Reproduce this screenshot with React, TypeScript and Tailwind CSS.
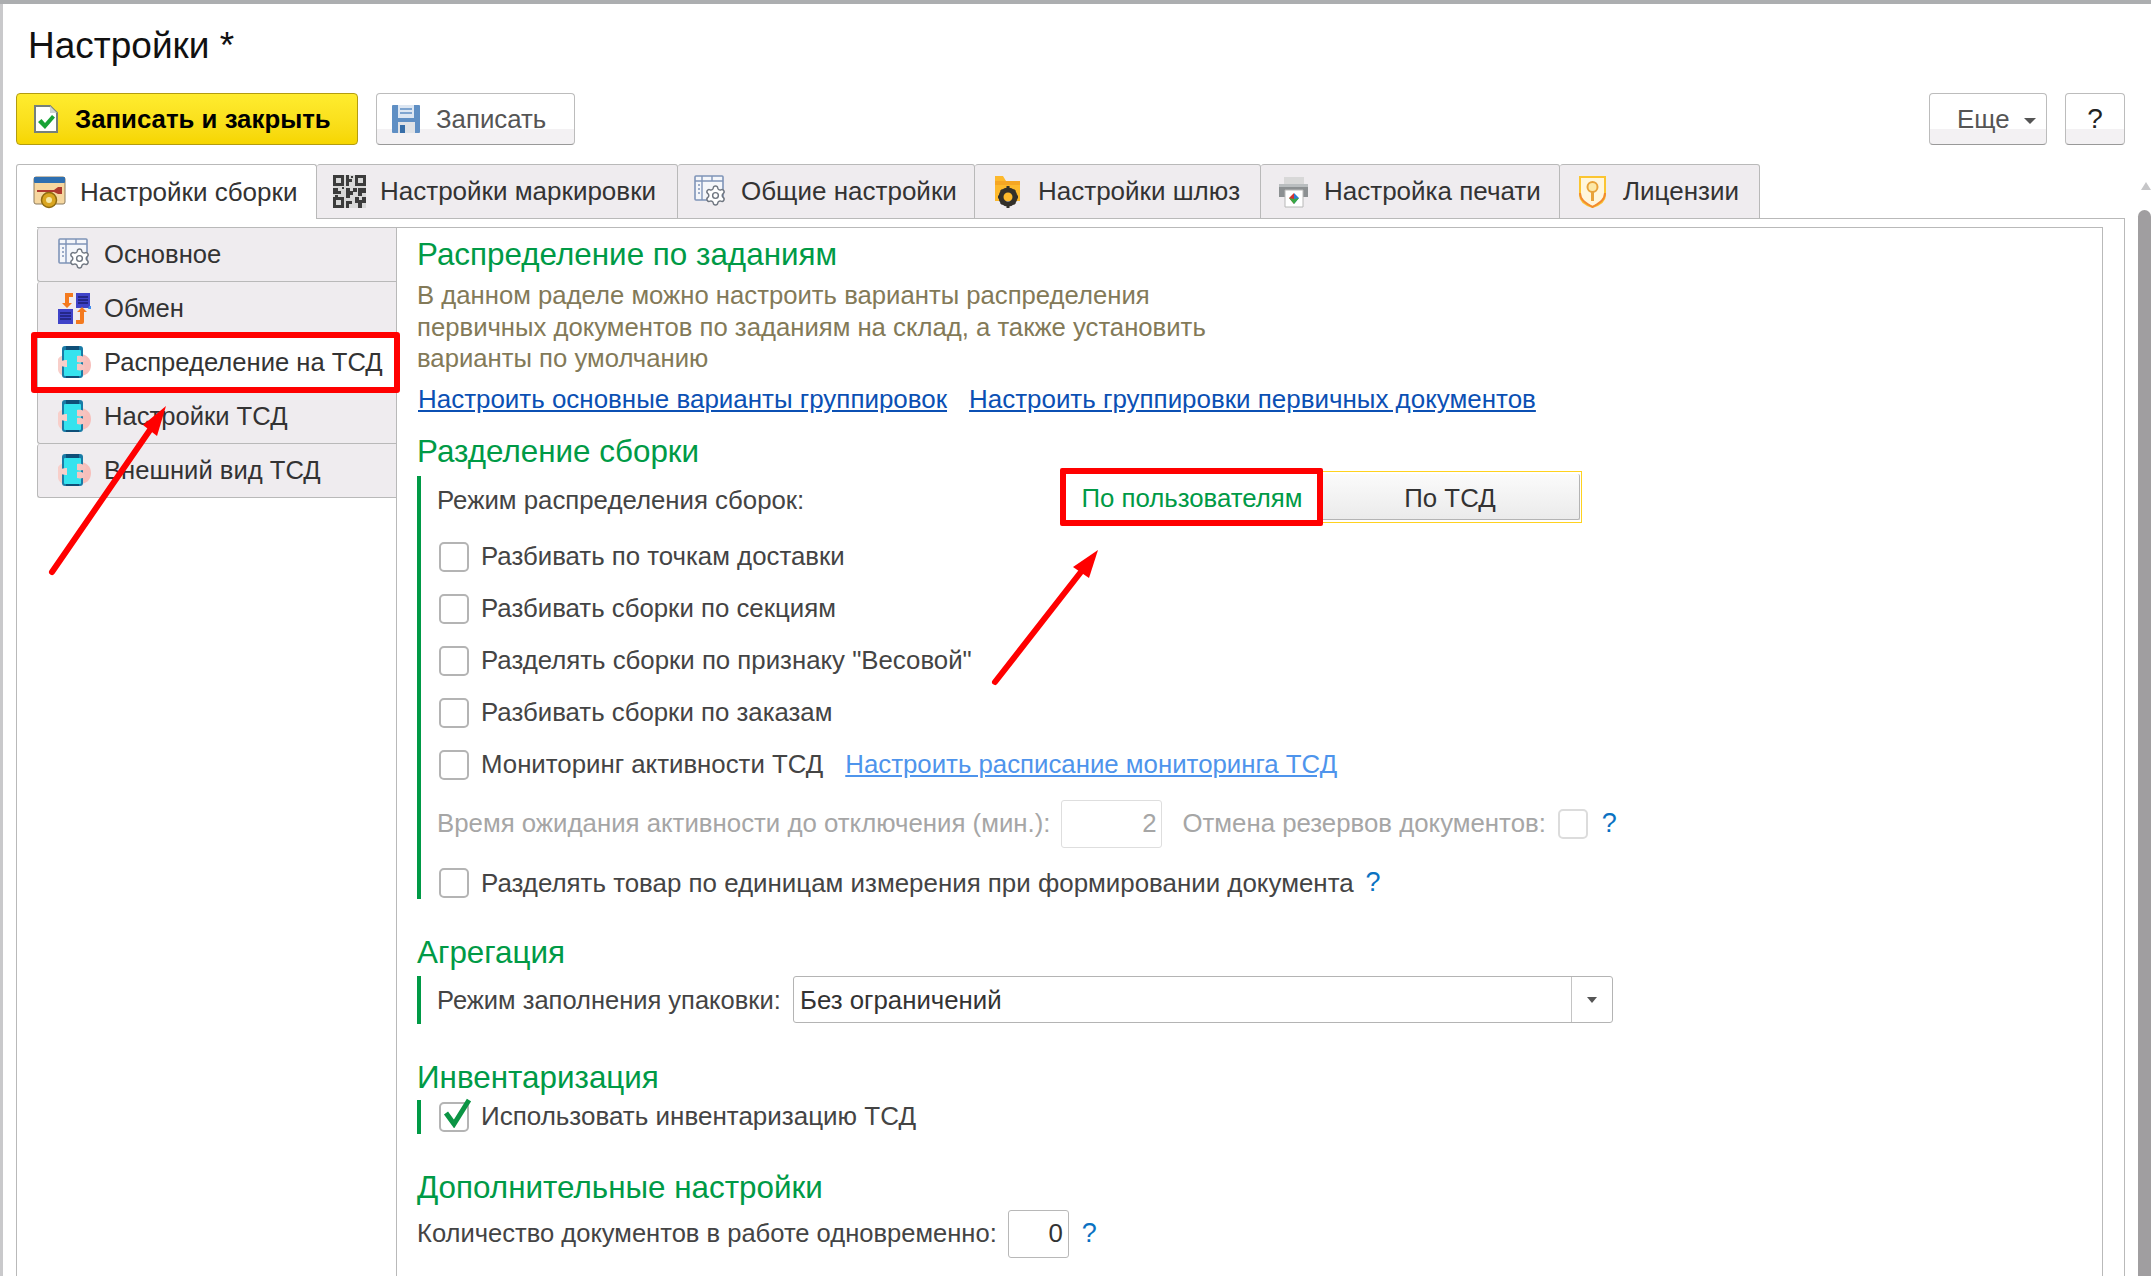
import React from 'react';
import { Settings } from 'lucide-react';

const GREEN = 'text-[#009a46]';

const GearTableIcon = () => (
  <svg width="33" height="33" viewBox="0 0 33 33" fill="none">
    <rect x="1" y="1" width="28" height="24" rx="1" fill="#f4f6fa" stroke="#7f94b8" strokeWidth="1.6" />
    <path d="M1 6h28M8 1v24M18 1v5" stroke="#7f94b8" strokeWidth="1.4" />
    <path d="M4 10h2M4 14h2M4 18h2" stroke="#7f94b8" strokeWidth="1.4" />
    <Settings x={10} y={9} width={23} height={23} color="#6f7680" fill="#ffffff" strokeWidth={1.5} />
  </svg>
);

const BuildIcon = () => (
  <svg width="33" height="33" viewBox="0 0 33 33" fill="none">
    <rect x="1" y="1" width="31" height="27" rx="2" fill="#f6d7a0" stroke="#8b7a5c" />
    <rect x="1" y="1" width="31" height="6" rx="1" fill="#2e6fb0" />
    <path d="M4 14h17l4-3h4v7h-4l-4-2H4z" fill="#b03a2e" />
    <circle cx="16" cy="24" r="7.5" fill="#d9a520" stroke="#8f6b10" strokeWidth="1.5" />
    <circle cx="16" cy="24" r="3" fill="#f6e8a6" />
  </svg>
);

const QrIcon = () => (
  <svg width="33" height="33" viewBox="0 0 33 33">
    <rect width="33" height="33" fill="#d8d8d8" />
    <path
      fill="#3c3c3c"
      d="M0 0h11v11H0zM3 3v5h5V3zM22 0h11v11H22zM25 3v5h5V3zM0 22h11v11H0zM3 25v5h5v-5zM13 0h3v4h3v3h-3v4h-3zM18 1h2v2h-2zM13 13h4v3h3v-3h4v4h-4v3h-3v3h-4zM0 13h5v3h3v3H0zM2 20h3v2H2zM25 13h8v5h-4v3h-4zM22 22h4v3h3v-3h4v6h-4v5h-4v-5h-3zM13 26h6v3h-3v4h-3zM9 12h2v2H9z"
    />
  </svg>
);

const FolderGearIcon = () => (
  <svg width="33" height="33" viewBox="0 0 33 33">
    <path d="M4 1h8l3 5h14v20H4z" fill="#fdb92c" />
    <path d="M4 6h25v4H4z" fill="#f5a623" />
    <circle cx="17" cy="22" r="7" fill="none" stroke="#33302a" strokeWidth="5" />
    <path d="M17 11v4M17 29v4M7 22h3M24 22h3M10 15l2 2M22 27l2 2M24 15l-2 2M12 27l-2 2" stroke="#33302a" strokeWidth="3" />
  </svg>
);

const PrinterIcon = () => (
  <svg width="33" height="33" viewBox="0 0 33 33">
    <rect x="7" y="2" width="20" height="8" fill="#d8d8d8" />
    <path d="M2 9h29v13H2z" fill="#8c9092" />
    <path d="M2 9h29v3H2z" fill="#b9bdbf" />
    <path d="M8 15h18v17H8z" fill="#fff" stroke="#b8b8b8" />
    <path d="M17 18l-5 5 5 6z" fill="#d62f2f" />
    <path d="M17 18l5 5-5 6z" fill="#2f7fd6" />
    <path d="M12 23l5 6 5-6-5 1z" fill="#39a845" />
  </svg>
);

const LicenseIcon = () => (
  <svg width="33" height="33" viewBox="0 0 33 33" fill="none">
    <path d="M4 2h25v18c0 6-6 10-12.500 12C10 30 4 26 4 20z" fill="#fff6dc" stroke="#fbc531" strokeWidth="2" />
    <path d="M4 18c0 7 6 10 12.500 14C23 28 29 25 29 18" stroke="#f28a30" strokeWidth="2" />
    <circle cx="16.500" cy="12" r="5" stroke="#e8a33a" strokeWidth="2" fill="#fde9a8" />
    <path d="M16.500 17v9" stroke="#e8a33a" strokeWidth="3" />
  </svg>
);

const ExchangeIcon = () => (
  <svg width="33" height="33" viewBox="0 0 33 33">
    <rect x="18" y="1" width="14" height="15" fill="#3f43c9" />
    <path d="M20 5h10M20 8h10M20 11h10" stroke="#1c1f73" strokeWidth="1.5" />
    <path d="M31 14h2v3h-3z" fill="#3f8cf0" />
    <rect x="0" y="17" width="15" height="15" fill="#3f43c9" />
    <path d="M2 21h11M2 24h11M2 27h11" stroke="#1c1f73" strokeWidth="1.5" />
    <path d="M7 1h8v4h-4v6h3l-5 5-5-5h3V3z" fill="#f47a1f" />
    <path d="M18 32v-4h4v-8h-3l5-5 5 5h-3v10a2 2 0 0 1-2 2z" fill="#f47a1f" />
  </svg>
);

const PhoneIcon = () => (
  <svg width="33" height="33" viewBox="0 0 33 33">
    <path d="M0 13c2-3 5-4 7-4v21c-3 0-6-2-7-6z" fill="#f8cfca" />
    <path d="M22 8c6 0 11 4 11 11s-5 11-11 11z" fill="#f7bfbb" />
    <rect x="4" y="0" width="21" height="32" rx="3" fill="#1a7ba6" />
    <rect x="6" y="4" width="17" height="26" rx="1" fill="#35e3ee" />
    <path d="M8 0h13v4H8zM8 30h13v2H8z" fill="#0e4f78" />
    <path d="M19 10c4-1 9 1 9 3.500S23 17 19 16zM19 18c4-1 8 1 8 3.500S23 25 19 24z" fill="#f7c4c0" />
    <path d="M9 21c-4 0-7-1-7-3.500S5 14 9 14z" fill="#f8cfca" />
  </svg>
);

const SaveCloseIcon = () => (
  <svg width="24" height="28" viewBox="0 0 24 28">
    <path d="M1 1h15l7 7v19H1z" fill="#fff" stroke="#75807c" strokeWidth="2" />
    <path d="M16 1v7h7z" fill="#cfd4d2" />
    <path d="M4 17l3.500-3 3.500 4 7-8 3 2.500L11 24z" fill="#17a335" />
  </svg>
);

const SaveIcon = () => (
  <svg width="28" height="28" viewBox="0 0 28 28">
    <rect width="28" height="28" rx="1" fill="#5f8fc4" />
    <rect x="6" y="0" width="16" height="13" fill="#dce6f2" />
    <path d="M8 4h12M8 8h12" stroke="#5f8fc4" strokeWidth="1.5" />
    <rect x="6" y="17" width="17" height="11" fill="#dfe2e6" />
    <rect x="8" y="20" width="5" height="8" fill="#376ea8" />
  </svg>
);

const tabs = [
  { label: 'Настройки сборки', width: 'w-[301px]', icon: <BuildIcon />, active: true },
  { label: 'Настройки маркировки', width: 'w-[361px]', icon: <QrIcon /> },
  { label: 'Общие настройки', width: 'w-[297px]', icon: <GearTableIcon /> },
  { label: 'Настройки шлюз', width: 'w-[286px]', icon: <FolderGearIcon /> },
  { label: 'Настройка печати', width: 'w-[299px]', icon: <PrinterIcon /> },
  { label: 'Лицензии', width: 'w-[200px]', icon: <LicenseIcon /> },
];

const sideItems = [
  { label: 'Основное', icon: <GearTableIcon /> },
  { label: 'Обмен', icon: <ExchangeIcon /> },
  { label: 'Распределение на ТСД', icon: <PhoneIcon />, active: true },
  { label: 'Настройки ТСД', icon: <PhoneIcon /> },
  { label: 'Внешний вид ТСД', icon: <PhoneIcon /> },
];

const Heading = ({ children, className = '' }: { children: React.ReactNode; className?: string }) => (
  <div className={`flex h-[40px] items-center pt-[3px] text-[31.4px] ${GREEN} ${className}`}>{children}</div>
);

const Checkbox = ({ checked = false, light = false }: { checked?: boolean; light?: boolean }) => (
  <span
    className={`relative block h-[30px] w-[30px] shrink-0 rounded-[5px] border-2 bg-white ${
      light ? 'border-[#dcdcdc]' : 'border-[#b4b4b4]'
    }`}
  >
    {checked && (
      <svg className="absolute left-[2px] top-[-6px]" width="28" height="30" viewBox="0 0 28 30">
        <path d="M3 15l8 11L26 2" fill="none" stroke="#0b9444" strokeWidth="5" />
      </svg>
    )}
  </span>
);

const CheckRow = ({ label, children }: { label: string; children?: React.ReactNode }) => (
  <div className="ml-[2px] flex h-[52px] items-center gap-[12px]">
    <Checkbox />
    <span>{label}</span>
    {children}
  </div>
);

const Help = ({ className = '' }: { className?: string }) => (
  <span className={`text-[27px] text-[#0a72c2] ${className}`}>?</span>
);

const NumberBox = ({ value, className = '' }: { value: string; className?: string }) => (
  <div className={`flex h-[48px] shrink-0 items-center justify-end rounded-[3px] border pr-[5px] ${className}`}>{value}</div>
);

export default function App() {
  return (
    <div className="relative flex h-[1276px] w-[2151px] flex-col overflow-hidden bg-white font-['Liberation_Sans',Arial,sans-serif] text-[25.8px] text-[#444444]">
      <div className="h-[4px] shrink-0 bg-[#acaeb0]" />
      <div className="flex min-h-0 flex-1">
        <div className="w-[3px] shrink-0 bg-[#c9c9cb]" />
        <div className="flex w-[2122px] shrink-0 flex-col pl-[13px]">
          <div className="mb-[7px] flex h-[82px] items-center pl-[12px] pt-[2px] text-[37px] text-[#111111]">Настройки *</div>

          <div className="flex h-[52px] shrink-0 items-stretch">
            <button className="flex w-[342px] items-center rounded-[4px] border border-[#b39c10] bg-gradient-to-b from-[#ffec2e] to-[#f6d600] pl-[17px] font-bold text-black">
              <SaveCloseIcon />
              <span className="ml-[17px] mt-[1px]">Записать и закрыть</span>
            </button>
            <button className="ml-[18px] flex w-[199px] items-center rounded-[4px] border border-[#bcbcbc] border-b-[#999999] bg-gradient-to-b from-white from-70% to-[#f3f1f3] to-70% pl-[15px] text-[#555555]">
              <SaveIcon />
              <span className="ml-[16px] mt-[1px]">Записать</span>
            </button>
            <button className="ml-auto flex w-[118px] items-center rounded-[4px] border border-[#bcbcbc] border-b-[#999999] bg-gradient-to-b from-white from-70% to-[#f3f1f3] to-70% pl-[27px] text-[#555555]">
              Еще
              <span className="ml-[14px] mt-[4px] h-0 w-0 border-x-[6px] border-t-[6px] border-x-transparent border-t-[#555555]" />
            </button>
            <button className="ml-[18px] w-[60px] rounded-[4px] border border-[#bcbcbc] border-b-[#999999] bg-gradient-to-b from-white from-70% to-[#f3f1f3] to-70% text-[28px] text-[#222222]">
              ?
            </button>
          </div>

          <div className="mt-[19px] flex h-[55px] shrink-0 text-[26px]">
            {tabs.map((tab) => (
              <div
                key={tab.label}
                className={`flex items-center rounded-t-[3px] border border-[#b9b9b9] pl-[16px] ${tab.width} ${
                  tab.active ? 'relative z-10 border-b-0 bg-white text-[#333333]' : 'border-l-0 bg-[#efecef] text-[#333333]'
                }`}
              >
                {tab.icon}
                <span className="ml-[14px]">{tab.label}</span>
              </div>
            ))}
          </div>

          <div className="-mt-px flex min-h-0 flex-1 flex-col border-x border-t border-[#b9b9b9] pl-[20px] pr-[21px] pt-[8px]">
            <div className="flex min-h-0 flex-1 border-r border-t border-[#b9b9b9]">
              <div className="w-[360px] shrink-0 border-r border-[#b9b9b9] text-[25.6px]">
                {sideItems.map((item) => (
                  <div
                    key={item.label}
                    className={`flex h-[54px] items-center rounded-l-[3px] border-b border-l border-[#b9b9b9] pl-[20px] text-[#333333] ${
                      item.active ? 'bg-white' : 'bg-[#efecef]'
                    }`}
                  >
                    {item.icon}
                    <span className="ml-[13px]">{item.label}</span>
                  </div>
                ))}
              </div>

              <div className="min-w-0 flex-1 pl-[20px]">
                <div className={`flex h-[52px] items-center pt-[2px] text-[31.4px] ${GREEN}`}>Распределение по заданиям</div>
                <div className="w-[880px] text-[25.7px] leading-[31.5px] text-[#837a58]">
                  В данном раделе можно настроить варианты распределения
                  <br />
                  первичных документов по заданиям на склад, а также установить
                  <br />
                  варианты по умолчанию
                </div>
                <div className="ml-[1px] mt-[9px] flex h-[32px] items-center gap-[22px] text-[25.95px] text-[#0b50b4] underline">
                  <span>Настроить основные варианты группировок</span>
                  <span>Настроить группировки первичных документов</span>
                </div>

                <Heading className="mt-[15px]">Разделение сборки</Heading>
                <div className="mt-[5px] border-l-[4px] border-[#009a46] pb-px pl-[16px]">
                  <div className="flex h-[46px] items-center">
                    <span className="mt-[3px] w-[625px] shrink-0">Режим распределения сборок:</span>
                    <div className="-mt-[4px] flex h-[52px] w-[520px] shrink-0 border border-[#ffd21f] bg-white">
                      <div className={`flex w-[258px] items-center justify-center pt-[4px] ${GREEN}`}>По пользователям</div>
                      <div className="my-[2px] mr-[1px] flex flex-1 items-center justify-center rounded-[2px] border-b border-r border-[#b4b4b4] bg-gradient-to-b from-[#fbfbfb] to-[#ebebeb] pt-[5px] text-[#333333]">
                        По ТСД
                      </div>
                    </div>
                  </div>
                  <div className="mt-[9px]">
                    <CheckRow label="Разбивать по точкам доставки" />
                    <CheckRow label="Разбивать сборки по секциям" />
                    <CheckRow label='Разделять сборки по признаку "Весовой"' />
                    <CheckRow label="Разбивать сборки по заказам" />
                    <CheckRow label="Мониторинг активности ТСД">
                      <span className="ml-[10px] text-[#4e94ec] underline">Настроить расписание мониторинга ТСД</span>
                    </CheckRow>
                  </div>
                  <div className="mt-[9px] flex h-[48px] items-center text-[#a6a6a6]">
                    <span>Время ожидания активности до отключения (мин.):</span>
                    <NumberBox value="2" className="ml-[11px] w-[101px] border-[#dedede]" />
                    <span className="ml-[20px]">Отмена резервов документов:</span>
                    <span className="ml-[12px]">
                      <Checkbox light />
                    </span>
                    <Help className="ml-[14px]" />
                  </div>
                  <div className="ml-[2px] mt-[20px] flex h-[30px] items-center gap-[12px]">
                    <Checkbox />
                    <span className="mt-[2px] text-[25.9px]">Разделять товар по единицам измерения при формировании документа</span>
                    <Help />
                  </div>
                </div>

                <Heading className="mt-[33px]">Агрегация</Heading>
                <div className="mt-[4px] flex h-[48px] items-center border-l-[4px] border-[#009a46] pl-[16px]">
                  <span className="mt-[1px] w-[356px] shrink-0 text-[25.5px]">Режим заполнения упаковки:</span>
                  <div className="flex h-[47px] w-[820px] shrink-0 items-stretch rounded-[3px] border border-[#b4b4b4] text-[#333333]">
                    <span className="flex flex-1 items-center pl-[6px] pt-[1px]">Без ограничений</span>
                    <span className="flex w-[41px] items-center justify-center border-l border-[#c4c4c4]">
                      <span className="h-0 w-0 border-x-[5px] border-t-[6px] border-x-transparent border-t-[#555555]" />
                    </span>
                  </div>
                </div>

                <Heading className="mt-[33px]">Инвентаризация</Heading>
                <div className="mt-[3px] flex h-[34px] items-center gap-[12px] border-l-[4px] border-[#009a46] pl-[18px]">
                  <Checkbox checked />
                  <span className="text-[26px]">Использовать инвентаризацию ТСД</span>
                </div>

                <Heading className="mt-[33px]">Дополнительные настройки</Heading>
                <div className="mt-[3px] flex h-[48px] items-center">
                  <span className="text-[25.55px]">Количество документов в работе одновременно:</span>
                  <NumberBox value="0" className="ml-[11px] w-[61px] border-[#b8b8b8] text-[#333333]" />
                  <Help className="ml-[13px]" />
                </div>
              </div>
            </div>
          </div>
        </div>

        <div className="ml-[13px] flex w-[13px] shrink-0 flex-col pt-[178px]">
          <span className="ml-[3px] h-0 w-0 border-x-[5px] border-b-[8px] border-x-transparent border-b-[#c6c6c8]" />
          <div className="mt-[20px] flex-1 rounded-t-[7px] bg-[#a09ea0]" />
        </div>
      </div>

      {/* пометки поверх скриншота */}
      <div className="absolute left-[31px] top-[332px] h-[61px] w-[369px] rounded-[3px] border-[6px] border-[#ff0000]" />
      <div className="absolute left-[1060px] top-[468px] h-[58px] w-[263px] rounded-[2px] border-[6px] border-[#ff0000]" />
      <svg className="pointer-events-none absolute left-0 top-0" width="2151" height="1276" viewBox="0 0 2151 1276" fill="none">
        <path d="M52 572L152 427" stroke="#ff0000" strokeWidth="6" strokeLinecap="round" />
        <path d="M166 406L143 425L157 436z" fill="#ff0000" />
        <path d="M995 682L1084 568" stroke="#ff0000" strokeWidth="6" strokeLinecap="round" />
        <path d="M1098 550L1073 567L1089 578z" fill="#ff0000" />
      </svg>
    </div>
  );
}
